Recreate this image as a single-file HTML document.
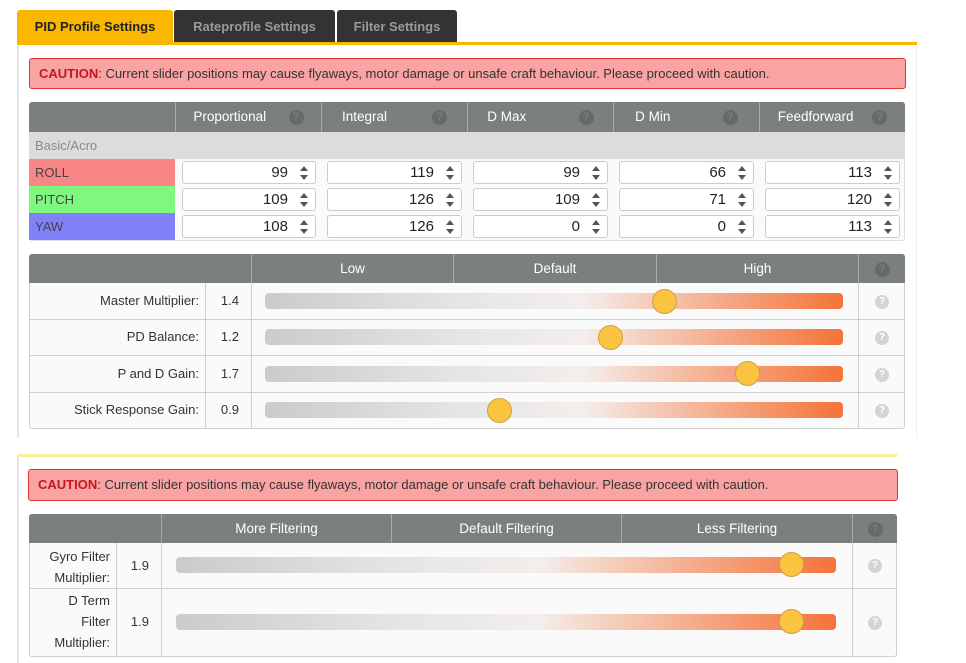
<!DOCTYPE html>
<html><head><meta charset="utf-8"><style>
*{box-sizing:border-box;margin:0;padding:0}
body{width:966px;height:663px;background:#fff;font-family:"Liberation Sans","DejaVu Sans",sans-serif;position:relative;overflow:hidden;color:#333}
.a{position:absolute}
.tab{position:absolute;top:10px;height:33px;font-weight:bold;font-size:13px;line-height:33px;text-align:center;border-radius:3px 3px 0 0}
.caution{position:absolute;background:#f9a3a3;border:1px solid #d33;border-radius:3px;font-size:13px;color:#333;padding-left:9px;line-height:29px}
.caution b{color:#c0181f}
.hdr{position:absolute;background:#7b807d;color:#fff;font-size:13.5px;text-align:center;border-radius:3px 3px 0 0}
.hc{position:absolute;top:0;height:100%;border-left:1px solid #a9aaa9;text-align:center}
.q{display:inline-block;vertical-align:middle;width:15px;height:15px;border-radius:50%;background:#666b68;color:#7b807d;font-size:11px;line-height:15px;text-align:center;font-weight:bold}
.qg{display:inline-block;width:14px;height:14px;border-radius:50%;background:#d4d4d4;color:#fff;font-size:10px;line-height:14px;text-align:center;font-weight:bold}
.inp{position:absolute;height:23px;background:#fff;border:1px solid #ccc;border-radius:3px;font-size:15px;text-align:right;padding-right:27px;line-height:21px;color:#222}
.sp{position:absolute;right:7px;top:4px;width:8px;height:14px}
.sp:before{content:"";position:absolute;left:0;top:0;border-left:4px solid transparent;border-right:4px solid transparent;border-bottom:5px solid #555}
.sp:after{content:"";position:absolute;left:0;bottom:0;border-left:4px solid transparent;border-right:4px solid transparent;border-top:5px solid #555}
.track{position:absolute;height:16px;border-radius:4px;background:linear-gradient(90deg,#cbcbcb 0%,#e6e6e6 35%,#f3eeec 55%,#f5c8b4 68%,#f59a72 85%,#f5733a 100%)}
.th{position:absolute;width:25px;height:25px;border-radius:50%;background:#fbc440;border:1px solid #c9a24a}
.row{position:absolute;border-top:1px solid #d0d0d0}
.lbl{position:absolute;font-size:13px;color:#333;text-align:right}
.vl{position:absolute;border-left:1px solid #d0d0d0}
</style></head><body>
<div class="tab" style="left:17px;width:156px;background:#f9b700;color:#222">PID Profile Settings</div>
<div class="tab" style="left:174px;width:161px;background:#333;color:#9a9a9a">Rateprofile Settings</div>
<div class="tab" style="left:337px;width:120px;background:#333;color:#9a9a9a">Filter Settings</div>
<div class="a" style="left:17px;top:42px;width:900px;height:3px;background:#f9b700"></div>
<div class="a" style="left:17px;top:45px;width:900px;height:393px;background:#fff;border-left:2px solid #e6e6e6;border-right:1px solid #eee"></div>

<div class="caution" style="left:29px;top:58px;width:877px;height:31px"><b>CAUTION</b>: Current slider positions may cause flyaways, motor damage or unsafe craft behaviour. Please proceed with caution.</div>

<div class="a" style="left:29px;top:102px;width:876px;height:139px;border:1px solid #ddd;border-radius:3px;background:#fafafa"></div>
<div class="hdr" style="left:29px;top:102px;width:876px;height:30px;line-height:30px">
 <div class="hc" style="left:146px;width:146px">Proportional&nbsp;&nbsp;&nbsp;&nbsp;&nbsp;&nbsp;<span class="q">?</span></div>
 <div class="hc" style="left:292px;width:146px">Integral&nbsp;&nbsp;&nbsp;&nbsp;&nbsp;&nbsp;&nbsp;&nbsp;&nbsp;&nbsp;&nbsp;&nbsp;<span class="q">?</span></div>
 <div class="hc" style="left:438px;width:146px">D Max&nbsp;&nbsp;&nbsp;&nbsp;&nbsp;&nbsp;&nbsp;&nbsp;&nbsp;&nbsp;&nbsp;&nbsp;&nbsp;&nbsp;<span class="q">?</span></div>
 <div class="hc" style="left:584px;width:146px">D Min&nbsp;&nbsp;&nbsp;&nbsp;&nbsp;&nbsp;&nbsp;&nbsp;&nbsp;&nbsp;&nbsp;&nbsp;&nbsp;&nbsp;<span class="q">?</span></div>
 <div class="hc" style="left:730px;width:146px">Feedforward&nbsp;&nbsp;&nbsp;&nbsp;&nbsp;<span class="q">?</span></div>
</div>
<div class="a" style="left:29px;top:132px;width:876px;height:27px;background:#dcdcdc;color:#888;font-size:13px;line-height:27px;padding-left:6px">Basic/Acro</div>
<div class="a" style="left:29px;top:159px;width:146px;height:27px;background:#f88686;font-size:13px;line-height:27px;padding-left:6px;color:#444">ROLL</div>
<div class="a" style="left:29px;top:186px;width:146px;height:27px;background:#7ff87f;font-size:13px;line-height:27px;padding-left:6px;color:#444">PITCH</div>
<div class="a" style="left:29px;top:213px;width:146px;height:27px;background:#8080f8;font-size:13px;line-height:27px;padding-left:6px;color:#444">YAW</div>

<div class="inp" style="left:182px;top:161px;width:134px">99<i class="sp"></i></div>
<div class="inp" style="left:327px;top:161px;width:135px">119<i class="sp"></i></div>
<div class="inp" style="left:473px;top:161px;width:135px">99<i class="sp"></i></div>
<div class="inp" style="left:619px;top:161px;width:135px">66<i class="sp"></i></div>
<div class="inp" style="left:765px;top:161px;width:135px">113<i class="sp"></i></div>
<div class="inp" style="left:182px;top:188px;width:134px">109<i class="sp"></i></div>
<div class="inp" style="left:327px;top:188px;width:135px">126<i class="sp"></i></div>
<div class="inp" style="left:473px;top:188px;width:135px">109<i class="sp"></i></div>
<div class="inp" style="left:619px;top:188px;width:135px">71<i class="sp"></i></div>
<div class="inp" style="left:765px;top:188px;width:135px">120<i class="sp"></i></div>
<div class="inp" style="left:182px;top:215px;width:134px">108<i class="sp"></i></div>
<div class="inp" style="left:327px;top:215px;width:135px">126<i class="sp"></i></div>
<div class="inp" style="left:473px;top:215px;width:135px">0<i class="sp"></i></div>
<div class="inp" style="left:619px;top:215px;width:135px">0<i class="sp"></i></div>
<div class="inp" style="left:765px;top:215px;width:135px">113<i class="sp"></i></div>

<div class="a" style="left:29px;top:254px;width:876px;height:175px;border:1px solid #d0d0d0;border-radius:3px;background:#fafafa"></div>
<div class="hdr" style="left:29px;top:254px;width:876px;height:29px;line-height:29px">
 <div class="hc" style="left:222px;width:202px">Low</div>
 <div class="hc" style="left:424px;width:203px">Default</div>
 <div class="hc" style="left:627px;width:202px">High</div>
 <div class="hc" style="left:829px;width:47px"><span class="q">?</span></div>
</div>
<div class="vl" style="left:205px;top:283px;height:145px"></div>
<div class="vl" style="left:251px;top:283px;height:145px"></div>
<div class="vl" style="left:858px;top:283px;height:145px"></div>
<div class="row" style="left:29px;top:319px;width:876px"></div>
<div class="row" style="left:29px;top:355px;width:876px"></div>
<div class="row" style="left:29px;top:392px;width:876px"></div>

<div class="lbl" style="left:29px;top:293px;width:170px">Master Multiplier:</div>
<div class="lbl" style="left:29px;top:329px;width:170px">PD Balance:</div>
<div class="lbl" style="left:29px;top:366px;width:170px">P and D Gain:</div>
<div class="lbl" style="left:29px;top:402px;width:170px">Stick Response Gain:</div>
<div class="lbl" style="left:205px;top:293px;width:34px">1.4</div>
<div class="lbl" style="left:205px;top:329px;width:34px">1.2</div>
<div class="lbl" style="left:205px;top:366px;width:34px">1.7</div>
<div class="lbl" style="left:205px;top:402px;width:34px">0.9</div>

<div class="track" style="left:265px;top:293px;width:578px"></div>
<div class="track" style="left:265px;top:329px;width:578px"></div>
<div class="track" style="left:265px;top:366px;width:578px"></div>
<div class="track" style="left:265px;top:402px;width:578px"></div>
<div class="th" style="left:652px;top:289px"></div>
<div class="th" style="left:598px;top:325px"></div>
<div class="th" style="left:735px;top:361px"></div>
<div class="th" style="left:487px;top:398px"></div>
<div class="a" style="left:875px;top:291px"><span class="qg">?</span></div>
<div class="a" style="left:875px;top:327px"><span class="qg">?</span></div>
<div class="a" style="left:875px;top:364px"><span class="qg">?</span></div>
<div class="a" style="left:875px;top:400px"><span class="qg">?</span></div>

<div class="a" style="left:17px;top:454px;width:880px;height:3px;background:#fbeea0"></div>
<div class="a" style="left:17px;top:457px;width:890px;height:206px;background:#fff;border-left:2px solid #e6e6e6"></div>
<div class="caution" style="left:28px;top:469px;width:870px;height:32px;line-height:30px"><b>CAUTION</b>: Current slider positions may cause flyaways, motor damage or unsafe craft behaviour. Please proceed with caution.</div>

<div class="a" style="left:29px;top:514px;width:868px;height:143px;border:1px solid #d0d0d0;border-radius:3px;background:#fafafa"></div>
<div class="hdr" style="left:29px;top:514px;width:868px;height:29px;line-height:29px">
 <div class="hc" style="left:132px;width:230px">More Filtering</div>
 <div class="hc" style="left:362px;width:230px">Default Filtering</div>
 <div class="hc" style="left:592px;width:231px">Less Filtering</div>
 <div class="hc" style="left:823px;width:45px"><span class="q">?</span></div>
</div>
<div class="vl" style="left:116px;top:543px;height:114px"></div>
<div class="vl" style="left:161px;top:543px;height:114px"></div>
<div class="vl" style="left:852px;top:543px;height:114px"></div>
<div class="row" style="left:29px;top:588px;width:868px"></div>
<div class="lbl" style="left:29px;top:546px;width:81px;line-height:21px">Gyro Filter<br>Multiplier:</div>
<div class="lbl" style="left:29px;top:590px;width:81px;line-height:21px">D Term<br>Filter<br>Multiplier:</div>
<div class="lbl" style="left:116px;top:558px;width:33px">1.9</div>
<div class="lbl" style="left:116px;top:614px;width:33px">1.9</div>
<div class="track" style="left:176px;top:557px;width:660px"></div>
<div class="track" style="left:176px;top:614px;width:660px"></div>
<div class="th" style="left:779px;top:552px"></div>
<div class="th" style="left:779px;top:609px"></div>
<div class="a" style="left:868px;top:555px"><span class="qg">?</span></div>
<div class="a" style="left:868px;top:612px"><span class="qg">?</span></div>
</body></html>
